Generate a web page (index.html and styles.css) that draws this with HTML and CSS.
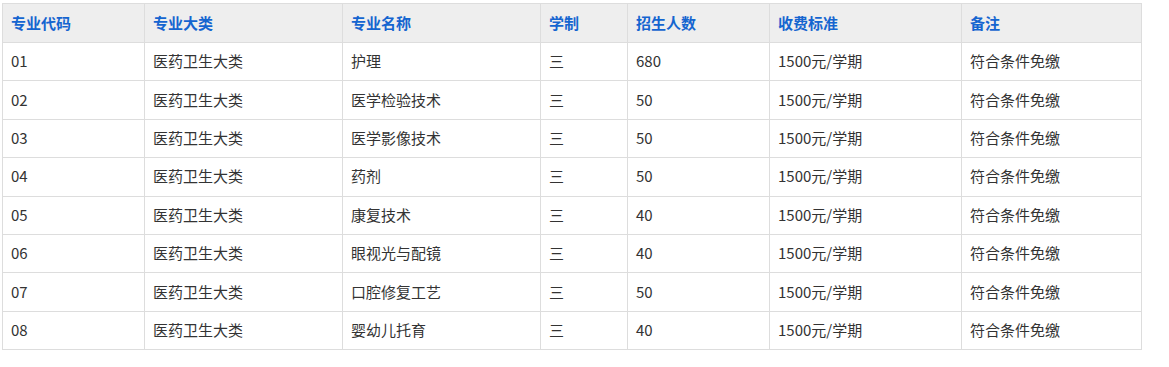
FILE: index.html
```html
<!DOCTYPE html>
<html lang="zh-CN">
<head>
<meta charset="utf-8">
<title>招生专业</title>
<link rel="stylesheet" href="styles.css">
</head>
<body>
<table class="majors">
  <colgroup>
    <col class="c1"><col class="c2"><col class="c3"><col class="c4"><col class="c5"><col class="c6"><col class="c7">
  </colgroup>
  <thead>
    <tr><th>专业代码</th><th>专业大类</th><th>专业名称</th><th>学制</th><th>招生人数</th><th>收费标准</th><th>备注</th></tr>
  </thead>
  <tbody>
    <tr><td>01</td><td>医药卫生大类</td><td>护理</td><td>三</td><td>680</td><td>1500元/学期</td><td>符合条件免缴</td></tr>
    <tr><td>02</td><td>医药卫生大类</td><td>医学检验技术</td><td>三</td><td>50</td><td>1500元/学期</td><td>符合条件免缴</td></tr>
    <tr><td>03</td><td>医药卫生大类</td><td>医学影像技术</td><td>三</td><td>50</td><td>1500元/学期</td><td>符合条件免缴</td></tr>
    <tr><td>04</td><td>医药卫生大类</td><td>药剂</td><td>三</td><td>50</td><td>1500元/学期</td><td>符合条件免缴</td></tr>
    <tr><td>05</td><td>医药卫生大类</td><td>康复技术</td><td>三</td><td>40</td><td>1500元/学期</td><td>符合条件免缴</td></tr>
    <tr><td>06</td><td>医药卫生大类</td><td>眼视光与配镜</td><td>三</td><td>40</td><td>1500元/学期</td><td>符合条件免缴</td></tr>
    <tr><td>07</td><td>医药卫生大类</td><td>口腔修复工艺</td><td>三</td><td>50</td><td>1500元/学期</td><td>符合条件免缴</td></tr>
    <tr><td>08</td><td>医药卫生大类</td><td>婴幼儿托育</td><td>三</td><td>40</td><td>1500元/学期</td><td>符合条件免缴</td></tr>
  </tbody>
</table>
</body>
</html>
```

FILE: styles.css
```css
html, body {
  background: #fff;
}
body {
  margin: 0;
  padding: 3px 0 0 2px;
  font-family: "Microsoft YaHei", "Noto Sans CJK SC", "Noto Sans", sans-serif;
  font-size: 15px;
  color: #333;
}
.majors {
  border-collapse: collapse;
  table-layout: fixed;
  width: 1139px;
}
.majors .c1 { width: 142px; }
.majors .c2 { width: 198px; }
.majors .c3 { width: 198px; }
.majors .c4 { width: 87px; }
.majors .c5 { width: 142px; }
.majors .c6 { width: 192px; }
.majors .c7 { width: 180px; }
.majors th,
.majors td {
  border: 1px solid #ddd;
  padding: 0 8px 1px;
  text-align: left;
  vertical-align: middle;
  line-height: 20px;
  white-space: nowrap;
}
.majors thead tr {
  height: 39px;
}
.majors tbody tr {
  height: 38.4px;
}
.majors th {
  background: #eee;
  color: #1565d0;
  font-weight: bold;
}
```
